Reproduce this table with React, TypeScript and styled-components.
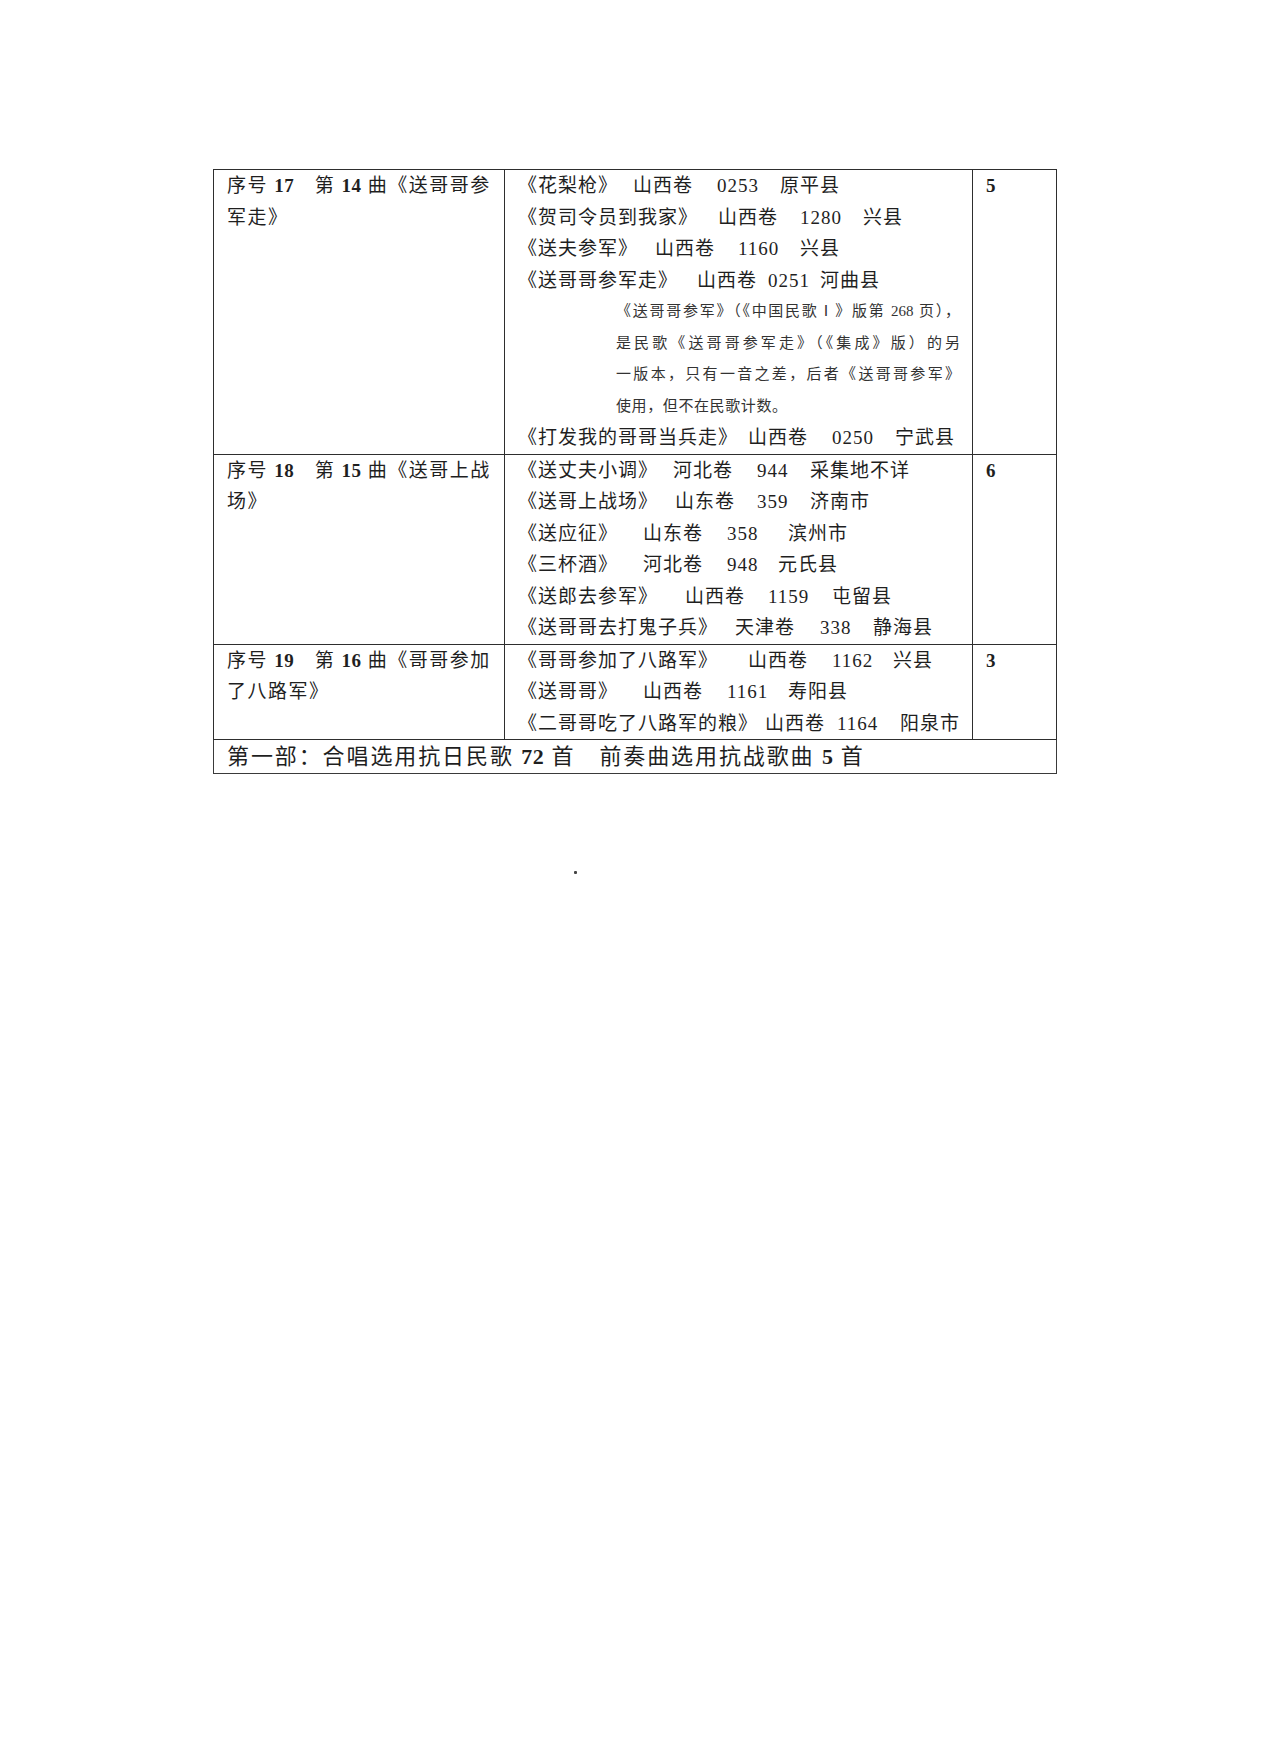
import React from 'react';
import styled, { createGlobalStyle } from 'styled-components';

type Entry = { parts: string[]; at: number[] };

type Row = {
  title: React.ReactNode[];
  entries: (Entry | 'note')[];
  count: string;
};

// the opening 《 sits in the right half of its em box, so offsets measured
// from the visible glyph need this much added for the first slot
const LEAD = 9;

const GlobalStyle = createGlobalStyle`
  html, body {
    margin: 0;
    padding: 0;
    background: #ffffff;
  }
  body {
    font-family: 'Liberation Serif', 'Noto Sans CJK SC', serif;
    color: #1f1f1f;
  }
`;

const Page = styled.div`
  position: relative;
  width: 1278px;
  min-height: 1761px;
  padding: 169px 0 0 213px;
  box-sizing: border-box;
`;

const Sheet = styled.table`
  width: 843px;
  table-layout: fixed;
  border-collapse: collapse;
  border: 1.5px solid #3a3a3a;
`;

const Cell = styled.td`
  vertical-align: top;
  padding: 0 0 0 13px;
  border: 1px solid #2e2e2e;
  font-size: 19px;
  letter-spacing: 1px;
  line-height: 31.5px;
`;

const TitleLine = styled.div`
  white-space: pre;
  letter-spacing: 1.5px;
`;

const Num = styled.b`
  font-family: 'Liberation Serif', serif;
  font-weight: 700;
  letter-spacing: 0.5px;
`;

const EntryLine = styled.div`
  display: flex;
  white-space: nowrap;
`;

const Seg = styled.span<{ $w?: number }>`
  flex: 0 0 ${(p) => (p.$w ? `${p.$w}px` : 'auto')};
`;

const NoteBlock = styled.div`
  margin-left: 98px;
  width: 344px;
  font-size: 15px;
  letter-spacing: 0;
  color: #333333;
`;

const NoteLine = styled.div<{ $last?: boolean }>`
  text-align: ${(p) => (p.$last ? 'left' : 'justify')};
  text-align-last: ${(p) => (p.$last ? 'left' : 'justify')};
  letter-spacing: ${(p) => (p.$last ? '0.6px' : '0')};
  white-space: nowrap;
`;

const Count = styled.div`
  font-weight: 700;
  font-family: 'Liberation Serif', serif;
`;

const Summary = styled.td`
  padding: 0 0 0 13px;
  border: 1.5px solid #3a3a3a;
  font-size: 22px;
  letter-spacing: 1.9px;
  line-height: 33px;
  white-space: pre;
`;

const Speck = styled.span`
  position: absolute;
  left: 574px;
  top: 871px;
  width: 3px;
  height: 3px;
  background: #444;
  border-radius: 1px;
`;

const notes = [
  '《送哥哥参军》（《中国民歌Ⅰ》版第 268 页），',
  '是民歌《送哥哥参军走》（《集成》版）的另',
  '一版本，只有一音之差，后者《送哥哥参军》',
  '使用，但不在民歌计数。',
];

const rows: Row[] = [
  {
    title: [
      <>序号 <Num>17</Num>　第 <Num>14</Num> 曲《送哥哥参</>,
      <>军走》</>,
    ],
    entries: [
      { parts: ['《花梨枪》', '山西卷', '0253', '原平县'], at: [0, 106, 190, 253] },
      { parts: ['《贺司令员到我家》', '山西卷', '1280', '兴县'], at: [0, 191, 273, 336] },
      { parts: ['《送夫参军》', '山西卷', '1160', '兴县'], at: [0, 128, 211, 273] },
      { parts: ['《送哥哥参军走》', '山西卷', '0251', '河曲县'], at: [0, 170, 241, 293] },
      'note',
      { parts: ['《打发我的哥哥当兵走》', '山西卷', '0250', '宁武县'], at: [0, 221, 305, 368] },
    ],
    count: '5',
  },
  {
    title: [
      <>序号 <Num>18</Num>　第 <Num>15</Num> 曲《送哥上战</>,
      <>场》</>,
    ],
    entries: [
      { parts: ['《送丈夫小调》', '河北卷', '944', '采集地不详'], at: [0, 146, 230, 283] },
      { parts: ['《送哥上战场》', '山东卷', '359', '济南市'], at: [0, 148, 230, 283] },
      { parts: ['《送应征》', '山东卷', '358', '滨州市'], at: [0, 116, 200, 261] },
      { parts: ['《三杯酒》', '河北卷', '948', '元氏县'], at: [0, 116, 200, 251] },
      { parts: ['《送郎去参军》', '山西卷', '1159', '屯留县'], at: [0, 158, 241, 305] },
      { parts: ['《送哥哥去打鬼子兵》', '天津卷', '338', '静海县'], at: [0, 208, 293, 346] },
    ],
    count: '6',
  },
  {
    title: [
      <>序号 <Num>19</Num>　第 <Num>16</Num> 曲《哥哥参加</>,
      <>了八路军》</>,
    ],
    entries: [
      { parts: ['《哥哥参加了八路军》', '山西卷', '1162', '兴县'], at: [0, 221, 305, 366] },
      { parts: ['《送哥哥》', '山西卷', '1161', '寿阳县'], at: [0, 116, 200, 261] },
      { parts: ['《二哥哥吃了八路军的粮》', '山西卷', '1164', '阳泉市'], at: [0, 238, 310, 373] },
    ],
    count: '3',
  },
];

const SongLine = ({ entry }: { entry: Entry }) => (
  <EntryLine>
    {entry.parts.map((p, i) => {
      const next = entry.at[i + 1];
      const w = next !== undefined ? next - entry.at[i] + (i === 0 ? LEAD : 0) : undefined;
      return (
        <Seg key={i} $w={w}>
          {p}
        </Seg>
      );
    })}
  </EntryLine>
);

const App = () => {
  return (
    <Page>
      <GlobalStyle />
      <Sheet>
        <colgroup>
          <col style={{ width: '291px' }} />
          <col style={{ width: '468px' }} />
          <col style={{ width: '84px' }} />
        </colgroup>
        <tbody>
          {rows.map((row, r) => (
            <tr key={r}>
              <Cell>
                {row.title.map((t, i) => (
                  <TitleLine key={i}>{t}</TitleLine>
                ))}
              </Cell>
              <Cell>
                {row.entries.map((e, i) =>
                  e === 'note' ? (
                    <NoteBlock key={i}>
                      {notes.map((n, j) => (
                        <NoteLine key={j} $last={j === notes.length - 1}>
                          {n}
                        </NoteLine>
                      ))}
                    </NoteBlock>
                  ) : (
                    <SongLine key={i} entry={e} />
                  )
                )}
              </Cell>
              <Cell>
                <Count>{row.count}</Count>
              </Cell>
            </tr>
          ))}
          <tr>
            <Summary colSpan={3}>
              第一部：合唱选用抗日民歌 <Num>72</Num> 首　前奏曲选用抗战歌曲 <Num>5</Num> 首
            </Summary>
          </tr>
        </tbody>
      </Sheet>
      <Speck />
    </Page>
  );
};

export default App;
